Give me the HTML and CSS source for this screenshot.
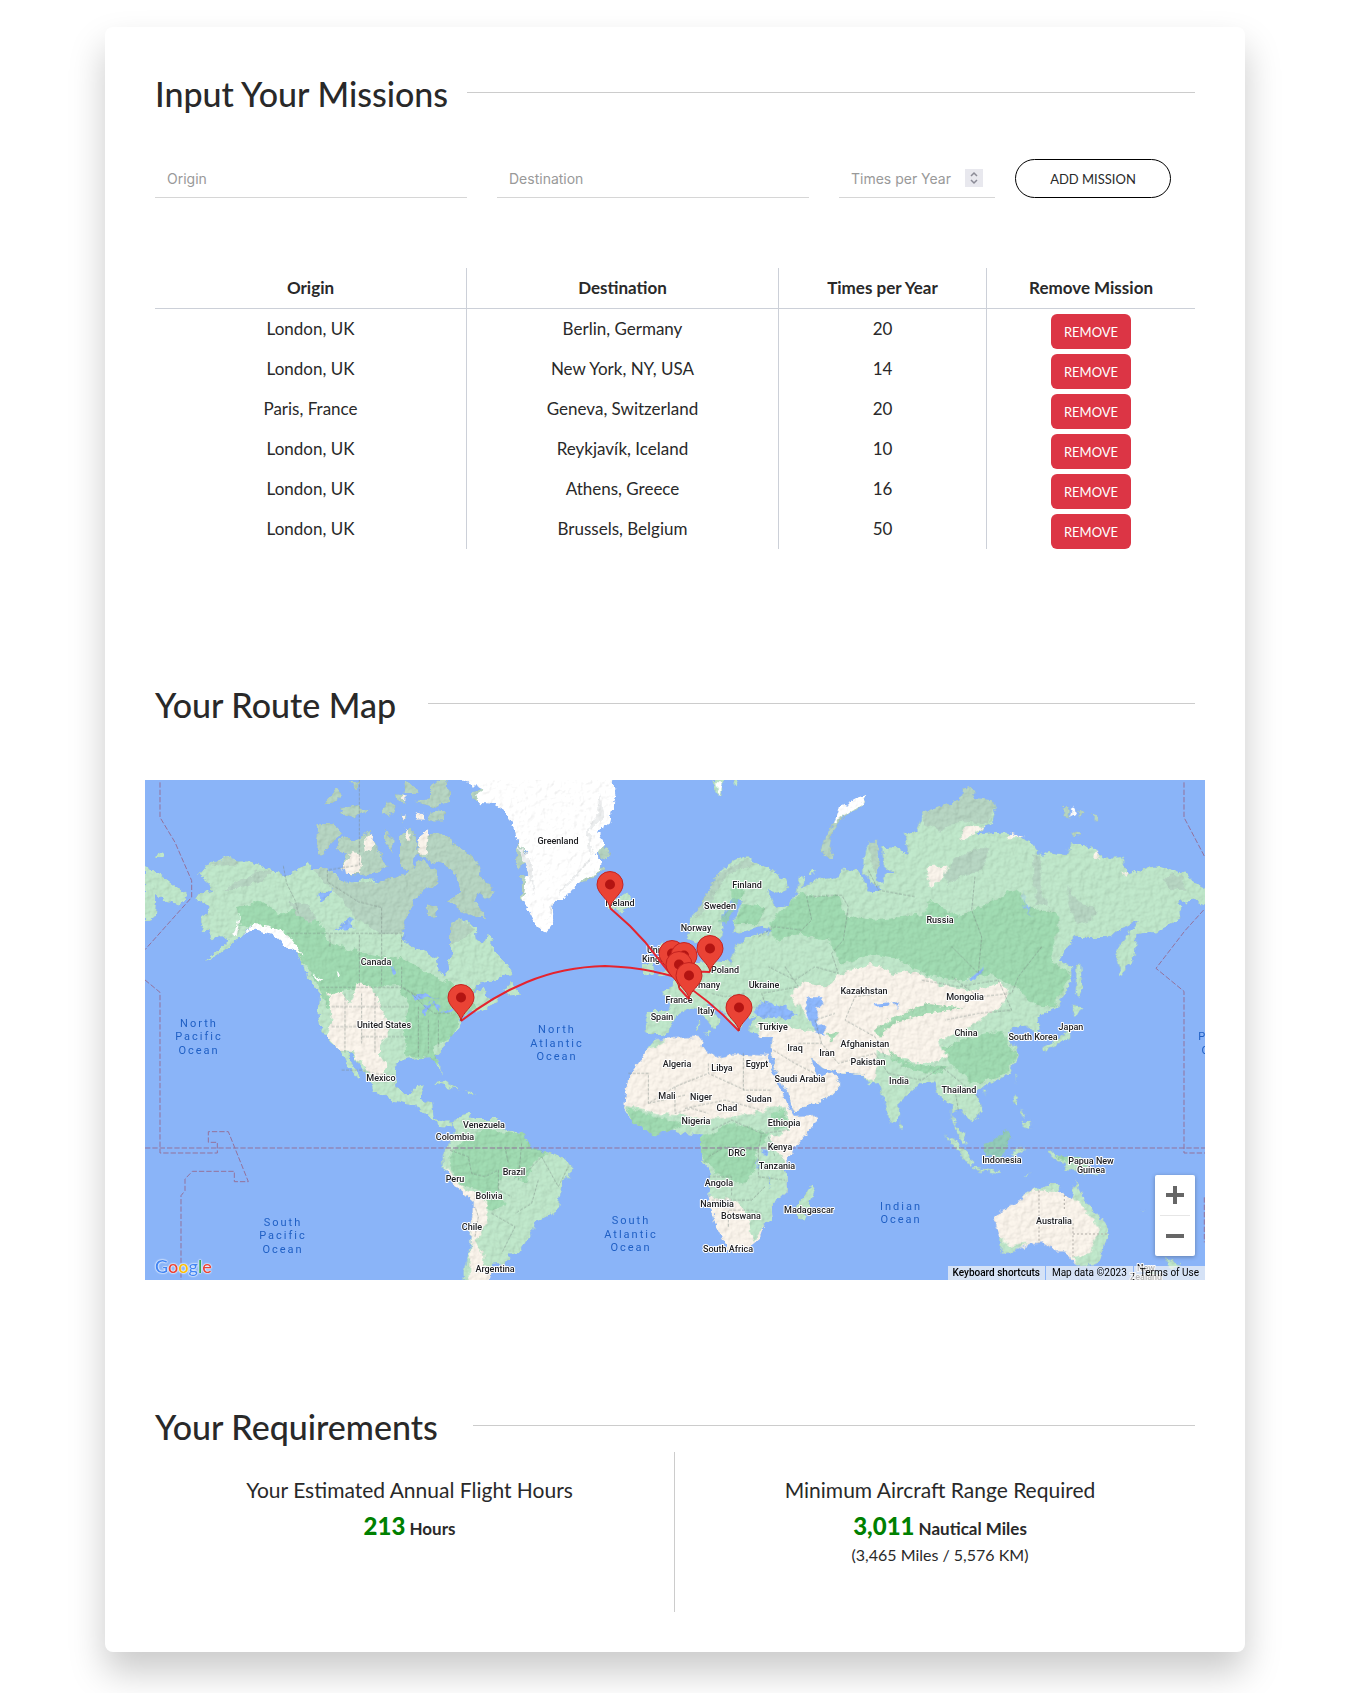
FILE: index.html
```html
<!DOCTYPE html>
<html lang="en">
<head>
<meta charset="utf-8">
<meta name="viewport" content="width=device-width, initial-scale=1">
<title>Mission Planner</title>
<link rel="stylesheet" href="styles.css">
</head>
<body>
<main class="card">
  <section class="missions">
    <header class="section-head section-head-wide"><h2>Input Your Missions</h2><hr></header>
    <form class="mission-form">
      <input class="field field-place" type="text" placeholder="Origin" aria-label="Origin">
      <input class="field field-place" type="text" placeholder="Destination" aria-label="Destination">
      <div class="field-count">
        <input class="field" type="number" placeholder="Times per Year" aria-label="Times per Year">
        <svg class="stepper" viewBox="0 0 18 18" aria-hidden="true"><path d="M6 7 9 4 12 7M6 11 9 14 12 11"/></svg>
      </div>
      <button class="add" type="button">ADD MISSION</button>
    </form>
    <table class="mission-table">
      <thead><tr><th class="col-place">Origin</th><th class="col-place">Destination</th><th>Times per Year</th><th>Remove Mission</th></tr></thead>
      <tbody>
        <tr><td>London, UK</td><td>Berlin, Germany</td><td>20</td><td><button class="remove" type="button">REMOVE</button></td></tr>
        <tr><td>London, UK</td><td>New York, NY, USA</td><td>14</td><td><button class="remove" type="button">REMOVE</button></td></tr>
        <tr><td>Paris, France</td><td>Geneva, Switzerland</td><td>20</td><td><button class="remove" type="button">REMOVE</button></td></tr>
        <tr><td>London, UK</td><td>Reykjavík, Iceland</td><td>10</td><td><button class="remove" type="button">REMOVE</button></td></tr>
        <tr><td>London, UK</td><td>Athens, Greece</td><td>16</td><td><button class="remove" type="button">REMOVE</button></td></tr>
        <tr><td>London, UK</td><td>Brussels, Belgium</td><td>50</td><td><button class="remove" type="button">REMOVE</button></td></tr>
      </tbody>
    </table>
  </section>

  <section class="routes">
    <header class="section-head section-head-map"><h2>Your Route Map</h2><hr></header>
    <div class="map">
      <svg class="world" viewBox="0 0 1060 500" preserveAspectRatio="xMidYMid slice" role="img" aria-label="Route map">
        <defs>
          <filter id="coast" x="0" y="-20" width="1060" height="540" filterUnits="userSpaceOnUse">
            <feTurbulence type="fractalNoise" baseFrequency="0.13" numOctaves="3" seed="4" result="n"/>
            <feDisplacementMap in="SourceGraphic" in2="n" scale="8" xChannelSelector="R" yChannelSelector="G" result="land"/>
            <feTurbulence type="fractalNoise" baseFrequency="0.16" numOctaves="4" seed="9" result="hills"/>
            <feDiffuseLighting in="hills" surfaceScale="1.6" lighting-color="#fff" result="lit"><feDistantLight azimuth="225" elevation="62"/></feDiffuseLighting>
            <feComposite in="lit" in2="land" operator="arithmetic" k1="0.5" k2="0" k3="0.58" k4="0" result="shade"/>
            <feComposite in="shade" in2="land" operator="in"/>
          </filter>
          <g id="pin"><path class="pin-body" d="M0 0C-1-9-13-14-13-23.500A13 13 0 0 1 13-23.500C13-14 1-9 0 0Z"/><circle class="pin-dot" cy="-23.500" r="5"/></g>
        </defs>
        <rect class="sea" width="1060" height="500"/>
        <g filter="url(#coast)"><g transform="scale(.33333)">
          <!-- North America -->
          <g transform="translate(-15 -18)">
            <path class="land" d="M176 300 200 272 230 258 262 243 290 262 330 262 370 275 400 290 435 305 470 290 505 265 520 285 560 285 600 310 625 330 650 325 670 310 720 322 760 315 790 315 815 290 840 260 890 290 895 330 850 350 820 380 800 430 790 450 785 490 820 520 890 550 898 590 915 612 925 590 920 560 935 545 930 520 940 490 930 440 970 433 1005 465 1008 495 1030 505 1045 475 1065 530 1105 575 1115 600 1070 618 1020 630 980 665 1030 640 1040 655 1045 680 1080 670 1070 690 1010 720 995 705 960 740 965 750 945 780 920 810 885 845 905 880 905 900 888 870 875 850 820 855 790 860 770 870 768 900 775 950 790 960 815 960 825 935 855 930 842 975 880 985 885 1035 915 1045 940 1045 935 1062 900 1055 865 1025 810 990 760 980 700 950 690 920 665 880 645 845 622 835 640 875 662 910 655 918 620 870 603 832 570 805 545 770 540 740 535 720 540 660 500 610 495 580 470 540 430 505 400 475 360 460 335 455 305 490 285 500 260 525 215 555 190 562 230 530 265 500 240 485 215 500 205 475 180 475 190 460 180 430 215 405 165 375 175 360 215 350 205 325Z"/>
            <path class="land" d="M15 275 60 300 100 330 145 365 120 395 80 385 50 360 45 430 15 440ZM50 242 65 234 80 240 70 250 52 250Z"/>
            <path class="tundra" d="M535 150 580 150 608 180 570 210 545 243 528 225ZM600 190 640 200 690 170 700 210 730 250 745 280 700 300 640 305 600 280 620 240 585 225ZM550 95 590 42 605 60 570 90ZM600 100 650 90 690 110 640 130 610 120ZM740 75 765 95 750 130 725 115ZM735 170 765 200 755 235 735 210ZM780 190 810 160 835 200 815 300 780 270ZM630 25 655 20 650 45ZM770 60 800 65 795 90 775 80ZM780 115 805 120 790 145ZM790 20 830 40 840 60 790 60ZM820 80 870 75 870 40 920 0 930 80 890 100ZM860 140 880 108 915 115 910 140ZM870 180 900 175 940 205 980 235 1015 270 1025 310 1065 350 1050 380 1015 355 1005 380 1040 430 1005 430 960 410 920 380 960 350 950 300 910 270 850 255 830 235 840 190ZM860 390 890 400 895 430 860 420Z"/>
            <path class="tundra" d="M520 285 560 285 625 330 720 322 815 290 840 260 890 290 895 330 850 350 820 380 800 430 785 480 730 480 690 455 655 440 600 370 560 330ZM210 270 262 245 300 270 240 275ZM930 440 970 435 1000 470 960 500 930 520Z"/>
            <path class="sand" d="M600 280 640 235 665 240 660 300 625 300ZM675 185 700 180 695 230 680 235ZM778 70 800 62 800 80ZM780 118 798 115 795 140ZM790 165 815 180 810 200ZM830 110 850 120 850 140 830 140ZM840 190 865 170 855 250 835 235Z"/>
            <path class="forest" d="M290 400 360 380 420 420 480 400 540 440 560 500 600 520 790 560 800 630 600 650 620 690 560 700 535 640 495 570 430 490 360 450 300 460ZM780 545 870 600 960 640 1010 640 985 670 1010 700 960 730 940 790 880 820 900 880 870 850 800 850 790 750 810 700 780 650Z"/>
            <path class="sand" d="M565 660 600 650 630 690 650 630 690 635 720 690 740 750 740 790 720 810 720 850 740 880 720 920 690 900 660 860 640 835 600 830 560 790 575 730Z"/>
            <path class="tundra" d="M350 290 400 290 360 320 290 345 250 345 300 320ZM440 380 500 390 530 430 510 450 470 420Z"/>
            <path class="ice" d="M280 480 300 420 290 490ZM310 485 340 450 390 455 440 480 490 545 440 520 395 480 340 465ZM520 600 550 615 540 625ZM590 590 600 600 595 608Z"/>
            <path class="lake" d="M535 360 580 345 565 365 540 385ZM580 470 640 430 625 450 645 460 600 465ZM750 570 770 605 760 605ZM790 470 785 490 800 500ZM815 665 850 655 890 680 860 670 830 680ZM850 690 870 685 860 720 850 710ZM875 685 905 695 895 710 890 700ZM895 720 930 705 960 700 930 715Z"/>
          </g>
          <!-- Greenland, Iceland, Newfoundland -->
          <g transform="translate(765 -18)">
            <path class="land" d="M310 650 335 620 345 640 362 662 330 665ZM610 370 650 375 680 355 700 375 690 400 660 415 630 405Z"/>
            <path class="tundra" d="M350 205 375 225 380 265 350 285ZM365 305 390 310 388 400 365 370ZM590 200 630 230 625 260 600 250ZM520 310 600 275 615 285 540 330ZM215 55 250 45 240 85 220 75Z"/>
            <path class="ice" d="M180-30V18L215 30 250 50 225 65 240 88 280 90 320 120 345 170 355 210 380 235 385 290 370 370 390 420 410 460 445 478 460 440 460 390 480 370 510 360 540 320 600 290 605 270 590 240 610 210 595 170 635 140 640 100 650 60 640 18V-30Z"/>
            <path class="snow-shade" d="M600 50 610 130 570 170 575 240 540 290 490 340 450 400 445 440 470 370 530 310 570 260 560 170 590 130ZM350 210 395 260 400 370 385 300Z"/>
          </g>
          <!-- Central and South America -->
          <g transform="translate(765 732)">
            <path class="land" d="M160 300 175 280 200 270 225 285 290 285 320 315 370 325 385 360 400 375 430 385 480 398 515 420 515 440 485 490 475 550 450 575 410 590 400 620 380 645 358 685 325 690 330 715 280 720 262 755 260 785 190 785 190 740 205 690 215 600 218 530 175 495 150 460 130 430 127 400 135 375 150 350 160 325ZM100 175 130 168 178 195 150 190ZM190 203 230 208 215 214Z"/>
            <path class="forest" d="M165 370 240 320 370 325 385 360 440 390 400 420 380 470 310 450 290 500 320 540 270 560 240 500 180 480 145 420Z"/>
            <path class="sand" d="M135 425 190 495 240 515 262 540 258 600 225 650 250 690 250 720 275 745 262 785H205L212 650 218 530 175 495 145 455Z"/>
          </g>
          <!-- Europe and Asia -->
          <g transform="translate(1485 -18)">
            <path class="land" d="M145 450 150 430 190 390 225 330 230 300 265 270 310 250 335 250 355 270 400 290 440 320 445 345 410 360 385 350 400 395 440 390 470 360 475 310 495 315 490 340 520 320 560 310 600 310 612 280 650 290 665 310 690 350 720 350 668 300 670 250 685 200 715 200 718 260 710 320 725 330 735 300 760 300 730 270 725 220 770 215 805 240 790 180 835 165 850 115 910 95 960 80 970 45 990 38 1005 70 1055 75 1068 110 1055 150 1010 180 1100 175 1170 200 1205 245 1230 230 1280 240 1290 210 1340 210 1390 250 1445 250 1465 300 1530 280 1560 275 1630 295 1670 330 1700 345V395L1660 380 1620 385 1625 430 1580 455 1540 475 1490 480 1485 550 1440 610 1425 550 1440 510 1495 440 1460 460 1430 470 1410 490 1340 490 1310 490 1280 520 1255 560 1295 575 1295 620 1260 690 1225 715 1190 735 1200 775 1175 775 1160 755 1120 760 1105 785 1135 840 1110 900 1040 935 1005 950 1028 1010 995 1045 960 1005 938 1015 945 1050 975 1080 982 1115 960 1095 935 1040 935 990 905 980 880 925 835 935 780 985 778 1030 755 1050 735 1000 715 930 690 935 665 900 590 895 545 880 510 850 520 880 545 910 575 895 605 930 560 975 465 1015 440 960 400 880 395 850 400 790 330 775 325 755 345 730 310 740 300 775 275 750 255 720 215 695 200 690 240 740 225 770 195 735 165 700 150 705 115 720 100 745 90 775 60 785 20 780 20 710 85 710 90 690 60 650 100 640 105 610 135 600 150 570 190 560 195 520 208 560 270 565 285 520 320 490 390 470 370 455 310 470 280 480 280 440 310 380 280 370 245 430 250 480 225 510 200 490 170 510 145 490Z"/>
            <path class="land" d="M75 500 100 540 110 590 75 610 55 605 85 570 60 520ZM10 570 40 565 45 600 10 605ZM170 740 178 740 178 765 170 765ZM190 775 215 775 212 785ZM220 18 250 18 245 70 225 55ZM280 18 300 18 295 40ZM470 330 475 312 490 320ZM510 290 522 290 520 302 510 302Z"/>
            <path class="tundra" d="M680 62 650 75 600 105 575 150 550 200 540 230 560 255 583 255 570 220 580 170 600 140 660 100ZM685 200 715 200 715 300 700 290ZM850 115 910 95 960 80 970 45 990 38 1005 70 1055 75 1065 110 1040 150 960 140 900 170 850 150ZM910 300 950 250 1000 225 1045 220 1030 290 960 310 920 330ZM1180 230 1205 260 1200 350 1230 400 1190 390 1180 300ZM1280 330 1310 380 1370 410 1350 440 1310 450 1290 400ZM1570 310 1620 300 1640 350 1590 345ZM230 300 330 255 350 270 260 300 190 420 160 430ZM1265 98 1290 98 1290 135 1270 130ZM1315 102 1332 115 1315 128ZM1345 120 1380 128 1365 138ZM1297 170 1320 175 1315 185 1298 182Z"/>
            <path class="forest" d="M430 400 480 360 560 370 600 360 610 420 700 440 850 420 870 380 960 430 1130 340 1160 400 1260 420 1250 480 1230 560 1295 600 1240 700 1180 690 1130 640 1050 600 950 620 860 600 780 560 700 540 600 570 570 500 480 480 400 500 390 450ZM280 450 310 390 370 400 360 450ZM960 800 1080 770 1130 840 1100 900 1000 930 940 880 910 820ZM240 440 280 380 270 350 300 320 310 360 260 450Z"/>
            <path class="sand" d="M450 665 490 625 560 635 600 600 690 570 760 600 800 590 870 610 890 630 940 640 1010 650 1080 625 1110 660 1080 700 1010 740 970 770 900 800 920 850 840 870 760 850 710 830 710 880 700 930 665 900 590 895 545 880 510 850 520 880 545 910 575 895 605 930 560 975 465 1015 440 960 400 880 395 850 400 790 360 790 350 755 430 750 480 770 530 770 480 700ZM1110 175 1160 190 1100 190ZM955 200 980 160 1010 155 1040 160 1000 180ZM860 280 920 275 910 310 870 340ZM1445 290 1465 300 1455 310ZM1360 250 1370 225 1380 255Z"/>
            <path class="ice" d="M680 62 650 72 600 100 580 145 600 135 660 95ZM1300 95 1310 120 1290 130ZM228 25 248 25 240 70Z"/>
            <path class="forest" d="M700 770 760 730 860 690 970 700 850 720 770 745 720 785ZM740 820 800 870 920 880 900 900 830 890 760 860ZM560 780 600 770 570 800Z"/>
            <path class="lake" d="M505 670 545 670 550 690 530 700 530 740 555 760 555 785 530 780 515 755 495 700ZM345 700 370 680 400 690 440 700 470 730 430 735 380 730 345 725ZM985 620 1010 600 1028 570 1025 600 1000 620ZM760 690 780 685 770 705ZM700 690 750 685 745 695 705 698ZM1147 345 1150 380 1180 430 1155 400ZM385 460 395 470 380 480Z"/>
          </g>
          <!-- Africa -->
          <g transform="translate(1485 732)">
            <path class="sand" d="M45 48 80 45 170 40 190 45 185 70 240 100 270 90 310 90 385 95 390 120 420 190 440 235 465 275 535 272 510 320 460 380 430 420 440 460 440 500 395 545 398 590 375 600 360 640 320 675 260 680 245 640 225 600 205 520 210 450 180 390 180 335 140 330 100 320 30 333-20 295-48 250-42 200-30 150 20 80Z"/>
            <path class="land" d="M20 75 45 48 75 50 40 70ZM-48 245-20 250 60 270 130 275 190 285 290 280 370 260 400 250 440 250 450 320 390 340 400 370 430 400 440 460 440 500 395 545 398 590 375 600 340 650 325 600 330 580 290 530 205 520 210 450 180 390 180 335 140 330 100 320 30 333-20 295ZM518 478 525 500 495 590 475 590 472 560 480 520 505 500ZM778 290 790 300 788 318 778 315Z"/>
            <path class="forest" d="M180 335 220 330 260 300 330 310 390 330 350 370 350 430 310 480 230 450 180 390ZM-40 250 20 270 130 300 100 320 30 333-20 295ZM395 270 430 255 445 310 410 320Z"/>
            <path class="lake" d="M365 375 385 378 378 395 365 392ZM388 455 396 495 390 495ZM352 400 358 435 352 430Z"/>
          </g>
          <!-- Oceania, Japan and the island chains -->
          <g transform="translate(2325 732)">
            <path class="sand" d="M225 575 240 560 295 535 315 510 345 492 365 495 375 480 420 480 415 500 440 520 455 515 468 465 480 500 500 535 530 570 560 600 567 625 545 690 530 720 470 725 450 710 440 680 410 680 370 658 320 665 290 680 250 690 240 680 245 650 228 610Z"/>
            <path class="land" d="M305 520 345 492 365 495 375 480 420 480 415 500 340 500ZM455 515 468 465 480 500 500 535 530 570 560 600 567 625 545 690 530 720 470 725 455 700 510 690 520 650 540 620 510 570 480 540ZM240 640 270 665 320 655 290 680 250 690 240 680Z"/>
            <path class="land" d="M380 380 400 378 410 395 480 400 520 440 540 460 500 450 460 440 440 440 430 415 395 400ZM70 325 100 345 155 400 160 425 130 410 95 355ZM160 430 240 440 240 449 165 439ZM278 375 322 368 290 388 305 410 290 400 280 410ZM285 210 298 215 290 250 280 240ZM300 290 330 290 332 318 310 305ZM300 255 320 270 310 280ZM285 155 294 155 288 175ZM187 195 200 198 192 212ZM455 0 455 40 400 65 375 90 365 70 400 50 440 20ZM310 455 340 445 315 460ZM735 698 750 710 778 722 755 745 745 730ZM660 550 677 563 670 563ZM655 760 720 735 690 780 640 780Z"/>
            <path class="land" d="M455-60 490-45 465-25 455-30ZM468-178 482-178 485-140 490-110 474-78 466-90ZM480 330 482 330Z"/>
            <path class="forest" d="M187 360 220 350 260 318 272 330 262 380 240 405 200 395ZM410 395 470 398 500 425 440 415Z"/>
          </g>
        </g></g>
        <!-- State and country borders -->
        <g transform="scale(.33333)" class="border">
          <path d="M643 0V255L547 270V305L640 365 710 382V620M415 258 425 310 450 360 460 400M425 460H770V500M555 465V500M643 465V622M530 622H770L800 640 840 680 870 700 920 700M590 870 650 870 690 880 730 885 750 910" />
          <path d="M600 640V820M650 640V790M690 640V820M560 680H790M560 740H780M650 770H800M820 680V830M850 720V820M880 720V800M770 560V620L830 655"/>
          <path d="M915 1110 970 1130 980 1180 1020 1190 1060 1170 1060 1230 1100 1250M1080 1100 1090 1150M1130 1090 1120 1200 1190 1130 1240 1220 1270 1160M1040 1300 1110 1340 1070 1420M1180 1200 1160 1270 1110 1300M990 1370 1000 1310 990 1280"/>
          <path d="M1450 880H1510V970L1590 920 1690 880M1590 920V1000L1640 985 1690 1000M1690 850V880L1800 930M1795 820V930H1880M1510 970 1620 945M1620 985 1740 960 1850 990M1700 1050 1760 1020 1850 1060M1690 1130 1740 1100 1840 1110 1850 1060 1930 1050M1690 1190H1760V1250M1840 1110V1190L1920 1200M1700 1260H1820L1860 1220M1750 1340V1290H1820L1850 1300M1870 1070 1890 1130"/>
          <path d="M1840 470 1890 440 1970 450 2000 420 1985 350 2090 345 2110 380 2095 480 2060 520 2080 580 2010 560 1950 600 1870 560M2170 270 2200 330 2310 350M2490 290 2480 390 2510 470 2500 580 2420 500M2690 500 2620 590 2600 640 2500 650 2420 590M2330 600 2440 620 2560 600 2600 690 2500 700 2400 720M1920 560 1960 620 1850 640 1860 670M1700 640 1740 650 1800 640M2200 640 2130 650 2100 720 2190 770 2220 830"/>
          <path d="M1885 810 1950 850 2010 880M1960 790 2030 790 2080 850 2190 820 2230 880M2030 790 2010 720 2070 700M2230 880 2330 900 2390 860 2500 950M2430 930 2440 990"/>
        </g>
        <g transform="scale(.33333)" class="state-line"><path d="M2682 1232V1390M2758 1245V1290M2784 1330V1430M2784 1362H2890"/></g>
        <g transform="scale(.33333)" class="date-line">
          <path d="M45 7V112L90 187 140 302V352L0 509M0 600 45 637V1119H217V1087H190V1055H250L310 1205H268V1174H142L120 1197V1232L108 1247V1500M3117 7V112L3180 232M3176 390 3120 452 3033 565 3117 634V1119H3180M3178 1252V1387M0 1104H3180"/>
        </g>
        <g class="country">
          <text x="231" y="185">Canada</text><text x="239" y="248">United States</text><text x="236" y="301">Mexico</text>
          <text x="413" y="64">Greenland</text><text x="475" y="126">Iceland</text>
          <text x="339" y="348">Venezuela</text><text x="310" y="360">Colombia</text><text x="369" y="395">Brazil</text><text x="310" y="402">Peru</text><text x="344" y="419">Bolivia</text><text x="327" y="450">Chile</text><text x="350" y="492">Argentina</text>
          <text x="602" y="108">Finland</text><text x="575" y="129">Sweden</text><text x="551" y="151">Norway</text><text x="515" y="173">United</text><text x="515" y="182">Kingdom</text><text x="580" y="193">Poland</text><text x="557" y="208">Germany</text><text x="619" y="208">Ukraine</text><text x="534" y="223">France</text><text x="561" y="234">Italy</text><text x="517" y="240">Spain</text><text x="628" y="250">Türkiye</text>
          <text x="719" y="214">Kazakhstan</text><text x="795" y="143">Russia</text><text x="820" y="220">Mongolia</text><text x="926" y="250">Japan</text><text x="821" y="256">China</text><text x="888" y="260">South Korea</text><text x="814" y="313">Thailand</text><text x="857" y="383">Indonesia</text><text x="946" y="384">Papua New</text><text x="946" y="393">Guinea</text><text x="909" y="444">Australia</text><text x="1001" y="491">New</text><text x="1001" y="500">Zealand</text>
          <text x="650" y="271">Iraq</text><text x="682" y="276">Iran</text><text x="720" y="267">Afghanistan</text><text x="723" y="285">Pakistan</text><text x="754" y="304">India</text><text x="655" y="302">Saudi Arabia</text>
          <text x="532" y="287">Algeria</text><text x="577" y="291">Libya</text><text x="612" y="287">Egypt</text><text x="522" y="319">Mali</text><text x="556" y="320">Niger</text><text x="582" y="331">Chad</text><text x="614" y="322">Sudan</text><text x="551" y="344">Nigeria</text><text x="639" y="346">Ethiopia</text><text x="635" y="370">Kenya</text><text x="592" y="376">DRC</text><text x="632" y="389">Tanzania</text><text x="574" y="406">Angola</text><text x="572" y="427">Namibia</text><text x="596" y="439">Botswana</text><text x="664" y="433">Madagascar</text><text x="583" y="472">South Africa</text>
        </g>
        <g class="ocean">
          <text x="54" y="247">North</text><text x="54" y="260">Pacific</text><text x="54" y="274">Ocean</text>
          <text x="138" y="446">South</text><text x="138" y="459">Pacific</text><text x="138" y="473">Ocean</text>
          <text x="412" y="253">North</text><text x="412" y="267">Atlantic</text><text x="412" y="280">Ocean</text>
          <text x="486" y="444">South</text><text x="486" y="458">Atlantic</text><text x="486" y="471">Ocean</text>
          <text x="756" y="430">Indian</text><text x="756" y="443">Ocean</text>
          <text x="1077" y="260">Pacific</text><text x="1077" y="274">Ocean</text>
        </g>
        <g class="route">
          <path d="M316 241Q348 216 382 202 418 187 460 186 495 187 527 196"/>
          <path d="M465 128 485 146 500 162 527 196Q546 191 565 192M527 196 539 198M527 196Q564 219 594 251M534 208 544 219"/>
        </g>
        <use href="#pin" x="465" y="128"/><use href="#pin" x="527" y="197"/><use href="#pin" x="539" y="199"/><use href="#pin" x="565" y="192"/><use href="#pin" x="534" y="208"/><use href="#pin" x="544" y="219"/><use href="#pin" x="316" y="241"/><use href="#pin" x="594" y="251"/>
      </svg>
      <a class="brand" href="#map" aria-label="Google"><span class="b">G</span><span class="r">o</span><span class="y">o</span><span class="b">g</span><span class="g">l</span><span class="r">e</span></a>
      <div class="zoom">
        <button type="button" aria-label="Zoom in"><svg viewBox="0 0 18 18"><path d="M9 0V18M0 9H18"/></svg></button>
        <button type="button" aria-label="Zoom out"><svg viewBox="0 0 18 18"><path d="M0 9H18"/></svg></button>
      </div>
      <div class="credits"><button type="button">Keyboard shortcuts</button><span>Map data ©2023</span><a href="#terms">Terms of Use</a></div>
    </div>
  </section>

  <section class="requirements">
    <header class="section-head section-head-needs"><h2>Your Requirements</h2><hr></header>
    <div class="results">
      <div class="result"><h3>Your Estimated Annual Flight Hours</h3><p class="figure"><strong>213</strong> Hours</p></div>
      <div class="result"><h3>Minimum Aircraft Range Required</h3><p class="figure"><strong>3,011</strong> Nautical Miles</p><p>(3,465 Miles / 5,576 KM)</p></div>
    </div>
  </section>
</main>
</body>
</html>
```

FILE: styles.css
```css
* { box-sizing: border-box; }

body {
  margin: 0;
  padding: 27px 101px 41px 105px;
  background: #fff;
  color: #292929;
  font: 16px/24px Lato, sans-serif;
}

h2, h3, p { margin: 0; font-weight: 400; }
button, input { font: inherit; color: inherit; }
button { cursor: pointer; }

.card {
  padding: 45px 50px 40px;
  border-radius: 8px;
  background: #fff;
  box-shadow: 0 20px 36px rgba(0, 0, 0, .21);
}

.section-head { display: grid; align-items: center; height: 44px; }
.section-head-wide { grid-template-columns: 30% 1fr; }
.section-head-map { grid-template-columns: 273px 1fr; }
.section-head-needs { grid-template-columns: 318px 1fr; }
.section-head h2 { font-size: 34px; line-height: 44px; font-weight: 500; white-space: nowrap; }
.section-head hr { width: 100%; margin: 0 0 3px; border: 0; border-top: 1px solid #ccc; }

.mission-form { display: flex; margin-top: 43px; font-family: Inter, sans-serif; }
.field {
  width: 100%;
  height: 39px;
  padding: 0 12px;
  border: 0;
  border-bottom: 1px solid #d6d6d6;
  background: none;
  font-size: 14px;
  appearance: textfield;
}
.field::placeholder { color: #999; opacity: 1; }
.field::-webkit-inner-spin-button { display: none; }
.field-place { width: 30%; margin-right: 30px; }
.field-count { position: relative; width: 15%; margin-right: 20px; }
.stepper { position: absolute; top: 10px; right: 12px; width: 18px; height: 18px; background: #e8e8ee; fill: none; stroke: #8b8b96; stroke-width: 1.5; }
.add {
  width: 15%;
  border: 1px solid #000;
  border-radius: 20px;
  background: #fff;
  font: 13px Lato, sans-serif;
}

.mission-table { width: 100%; margin-top: 70px; border-collapse: separate; border-spacing: 0; table-layout: fixed; text-align: center; font-size: 17px; }
.mission-table th, .mission-table td { height: 40px; padding: 0; border-right: 1px solid #ccd0d8; }
.mission-table th { height: 41px; border-bottom: 1px solid #ccd0d8; font-size: 17px; font-weight: 700; }
.mission-table th:last-child, .mission-table td:last-child { border-right: 0; }
.mission-table td:last-child { padding-top: 5px; vertical-align: top; }
.col-place { width: 30%; }
.remove { display: block; width: 80px; height: 35px; margin: 0 auto; padding: 0; border: 0; border-radius: 6px; background: #dc3545; color: #fff; font-size: 13px; }

.routes { margin-top: 134px; }
.map { position: relative; height: 500px; margin: 53px -10px 0; overflow: hidden; background: #8ab4f8; }
.world { display: block; width: 100%; height: 100%; }
.sea, .lake { fill: #8ab4f8; }
.land { fill: #bbe2c6; }
.tundra { fill: #b2d0be; }
.forest { fill: #97d3a8; opacity: .85; }
.sand { fill: #f5efe6; }
.ice { fill: #fff; }
.snow-shade { fill: #e9ebec; }
.border { fill: none; stroke: #7b8a85; stroke-width: 2; stroke-dasharray: 9 4; opacity: .75; }
.state-line { fill: none; stroke: #b0aca6; stroke-width: 3; stroke-dasharray: 6 6; }
.date-line { fill: none; stroke: #94719b; stroke-width: 3; stroke-dasharray: 16 6; }
.country { font: 500 9px Roboto, sans-serif; fill: #202124; stroke: #fff; stroke-width: 2px; stroke-linejoin: round; paint-order: stroke; text-anchor: middle; }
.ocean { font: 11px Roboto, sans-serif; letter-spacing: 2px; fill: #1f5fc4; text-anchor: middle; }
.route { fill: none; stroke: #e5232e; stroke-width: 2; }
.pin-body { fill: #ea4335; stroke: #c5221f; stroke-width: 1; }
.pin-dot { fill: #b31412; }

.brand { position: absolute; left: 10px; bottom: 4px; font: 500 18px/20px Lato, sans-serif; text-decoration: none; text-shadow: 0 0 2px #fff, 0 0 2px #fff, 0 0 1px #fff; }
.b { color: #4285f4; }
.r { color: #ea4335; }
.y { color: #fbbc04; }
.g { color: #34a853; }
.zoom { position: absolute; right: 10px; bottom: 24px; width: 40px; padding: 0 5px; border-radius: 2px; background: #fff; box-shadow: 0 1px 4px rgba(0, 0, 0, .3); }
.zoom button { display: grid; place-items: center; width: 30px; height: 40px; padding: 0; border: 0; background: none; }
.zoom button + button { height: 41px; border-top: 1px solid #e6e6e6; }
.zoom svg { width: 18px; height: 18px; stroke: #666; stroke-width: 4; }
.credits { position: absolute; right: 0; bottom: 0; display: flex; gap: 1px; font: 10px/14px Roboto, sans-serif; color: #000; }
.credits > * { padding: 0 6px; border: 0; background: rgba(245, 245, 245, .7); color: inherit; text-decoration: none; }
.credits button { padding: 0 5px; font-weight: 500; }

.requirements { margin-top: 125px; }
.results { display: grid; grid-template-columns: 1fr 1fr; margin: 3px -10px 0; text-align: center; }
.result { min-height: 160px; padding-top: 22px; }
.result:first-child { border-right: 1px solid #ccc; }
.result h3 { font-size: 21px; line-height: 32px; }
.figure { margin-top: 4px; font-size: 17px; line-height: 32px; font-weight: 700; }
.figure + p { line-height: 20px; }
.figure strong { color: green; font-size: 24px; }
```
